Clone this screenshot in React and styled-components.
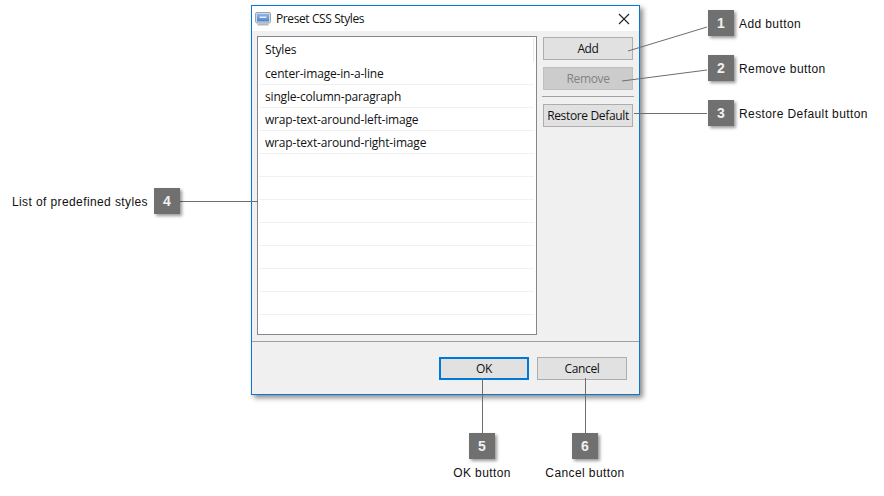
import React from 'react'
import styled, { createGlobalStyle } from 'styled-components'

const styleNames = [
  'center-image-in-a-line',
  'single-column-paragraph',
  'wrap-text-around-left-image',
  'wrap-text-around-right-image',
]
const emptyRows = 8

const callouts = [
  { n: 1, label: 'Add button', x: 708, y: 10, side: 'right' },
  { n: 2, label: 'Remove button', x: 708, y: 55, side: 'right' },
  { n: 3, label: 'Restore Default button', x: 708, y: 100, side: 'right' },
  { n: 4, label: 'List of predefined styles', x: 154, y: 188, side: 'left' },
  { n: 5, label: 'OK button', x: 469, y: 433, side: 'below' },
  { n: 6, label: 'Cancel button', x: 572, y: 433, side: 'below' },
]

const leaders = [
  [707, 27, 628, 51],
  [707, 70, 622, 81],
  [707, 113.5, 634, 113.5],
  [180, 201.5, 258, 201.5],
  [482.5, 433, 482.5, 378],
  [585.5, 433, 585.5, 378],
]

function App() {
  return (
    <Stage>
      <GlobalStyle />
      <Dialog>
        <TitleBar>
          <WindowIcon />
          <TitleText>Preset CSS Styles</TitleText>
          <CloseIcon />
        </TitleBar>
        <Body>
          <Main>
            <ListBox>
              <HeaderRow>Styles</HeaderRow>
              {styleNames.map((name) => (
                <Row key={name}>{name}</Row>
              ))}
              {Array.from({ length: emptyRows }, (_, i) => (
                <Row key={i} />
              ))}
            </ListBox>
            <SideButtons>
              <Button>Add</Button>
              <Button disabled>Remove</Button>
              <Separator />
              <Button>Restore Default</Button>
            </SideButtons>
          </Main>
          <Footer>
            <Button $primary>OK</Button>
            <Button>Cancel</Button>
          </Footer>
        </Body>
      </Dialog>

      <Leaders width="884" height="496">
        {leaders.map(([x1, y1, x2, y2], i) => (
          <line key={i} x1={x1} y1={y1} x2={x2} y2={y2} stroke="#6e6e6e" strokeWidth="1" />
        ))}
      </Leaders>

      {callouts.map((c) => (
        <Callout key={c.n} $x={c.x} $y={c.y}>
          <Badge>{c.n}</Badge>
          <Label $side={c.side}>{c.label}</Label>
        </Callout>
      ))}
    </Stage>
  )
}

function WindowIcon() {
  return (
    <svg width="16" height="16" viewBox="0 0 16 16">
      <defs>
        <linearGradient id="screen" x1="0" y1="0" x2="0" y2="1">
          <stop offset="0" stopColor="#8db4e6" />
          <stop offset="1" stopColor="#4f86cf" />
        </linearGradient>
      </defs>
      <rect x="0.5" y="1.5" width="15" height="10.5" rx="1.5" fill="#d5d9de" stroke="#9aa2aa" />
      <rect x="2" y="3" width="12" height="7.5" fill="url(#screen)" />
      <rect x="4.5" y="5.5" width="7" height="1.5" fill="#e4eefa" />
      <rect x="2.5" y="12.5" width="11" height="2" rx="0.5" fill="#b4b8bc" />
    </svg>
  )
}

function CloseIcon() {
  return (
    <CloseSvg width="12" height="12" viewBox="0 0 12 12">
      <path d="M1 1 L11 11 M11 1 L1 11" stroke="#222" strokeWidth="1.1" fill="none" />
    </CloseSvg>
  )
}

export default App

const GlobalStyle = createGlobalStyle`
  html, body {
    margin: 0;
    background: #fff;
  }
`

const Stage = styled.div`
  position: relative;
  width: 884px;
  height: 496px;
  padding: 5px 0 0 251px;
  box-sizing: border-box;
  overflow: hidden;
  font-family: "Open Sans", "Noto Sans", sans-serif;
`

const Dialog = styled.div`
  width: 389px;
  height: 390px;
  box-sizing: border-box;
  border: 1px solid #0a78d2;
  background: #f0f0f0;
  box-shadow: 3px 3px 5px rgba(0, 0, 0, 0.45);
  display: flex;
  flex-direction: column;
`

const TitleBar = styled.div`
  height: 25px;
  flex: none;
  background: #fff;
  display: flex;
  align-items: center;
  gap: 5px;
  padding: 0 9px 0 3px;
`

const TitleText = styled.span`
  flex: 1;
  font-size: 12px;
  letter-spacing: -0.4px;
  color: #111;
`

const CloseSvg = styled.svg`
  display: block;
`

const Body = styled.div`
  flex: 1;
  display: flex;
  flex-direction: column;
`

const Main = styled.div`
  flex: 1;
  display: flex;
  gap: 6px;
  padding: 5px 6px 6px 5px;
`

const ListBox = styled.div`
  width: 280px;
  height: 299px;
  box-sizing: border-box;
  border: 1px solid #828790;
  background: #fff;
  padding: 1px 2px 0 1px;
  overflow: hidden;
`

const HeaderRow = styled.div`
  height: 24px;
  line-height: 24px;
  padding-left: 6px;
  font-size: 12px;
  color: #111;
  letter-spacing: -0.18px;
  border-right: 1px solid #e8e8e8;
`

const Row = styled.div`
  height: 22px;
  line-height: 24px;
  margin-bottom: 1px;
  padding-left: 6px;
  font-size: 12px;
  letter-spacing: -0.18px;
  color: #111;
  box-shadow: 0 1px 0 #f0f0f0;
`

const SideButtons = styled.div`
  width: 90px;
  display: flex;
  flex-direction: column;
  gap: 7px;
  padding-top: 1px;
`

const Button = styled.button`
  width: 90px;
  height: 23px;
  padding: 0;
  box-sizing: border-box;
  font-family: inherit;
  font-size: 12px;
  letter-spacing: -0.35px;
  color: ${(p) => (p.disabled ? '#838383' : '#111')};
  background: ${(p) => (p.disabled ? '#cccccc' : '#e1e1e1')};
  border: ${(p) => (p.$primary ? '2px solid #0078d7' : '1px solid #adadad')};
  border-color: ${(p) => (p.disabled ? '#bfbfbf' : p.$primary ? '#0078d7' : '#adadad')};
`

const Separator = styled.div`
  height: 1px;
  margin: -1px -1px 0 -1px;
  background: #a0a0a0;
`

const Footer = styled.div`
  height: 53px;
  flex: none;
  box-sizing: border-box;
  border-top: 1px solid #a0a0a0;
  display: flex;
  justify-content: flex-end;
  gap: 8px;
  padding: 15px 12px 0 0;
`

const Leaders = styled.svg`
  position: absolute;
  left: 0;
  top: 0;
  pointer-events: none;
`

const Callout = styled.div`
  position: absolute;
  left: ${(p) => p.$x}px;
  top: ${(p) => p.$y}px;
  width: 26px;
  height: 26px;
`

const Badge = styled.div`
  width: 26px;
  height: 26px;
  background: #707070;
  box-shadow: 2px 2px 3px rgba(0, 0, 0, 0.4);
  color: #f0f0f0;
  font-family: "Liberation Sans", Arial, sans-serif;
  font-size: 14px;
  font-weight: 700;
  line-height: 26px;
  text-align: center;
`

const sidePlacement = {
  right: 'left: 31px; top: 6px;',
  left: 'right: 32px; top: 6px;',
  below: 'left: 13px; top: 32px; transform: translateX(-50%);',
}

const Label = styled.span`
  position: absolute;
  ${(p) => sidePlacement[p.$side]}
  font-family: "Liberation Sans", Arial, sans-serif;
  font-size: 12px;
  line-height: 16px;
  letter-spacing: 0.4px;
  white-space: nowrap;
  color: #111;
`
